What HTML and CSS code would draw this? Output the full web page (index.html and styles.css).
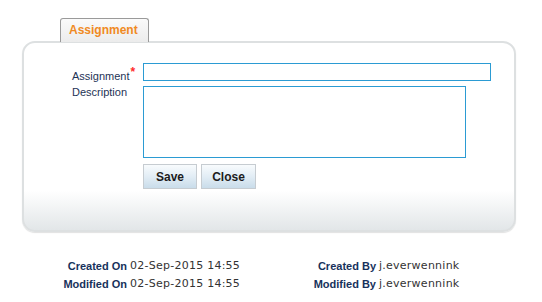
FILE: index.html
```html
<!DOCTYPE html>
<html>
<head>
<meta charset="utf-8">
<link rel="stylesheet" href="styles.css">
</head>
<body>
<div class="page">
  <div class="tabs">
    <div class="tab">Assignment</div>
  </div>
  <div class="panel">
    <div class="form">
      <label class="lbl lbl-first">Assignment<span class="req">*</span></label>
      <div class="field"><input class="input" type="text"></div>
      <label class="lbl">Description</label>
      <div class="field"><textarea class="area"></textarea></div>
      <div></div>
      <div class="buttons">
        <button class="btn">Save</button>
        <button class="btn">Close</button>
      </div>
    </div>
  </div>
  <div class="meta">
    <div class="mlabel">Created On</div>
    <div class="mvalue">02-Sep-2015 14:55</div>
    <div class="mlabel">Created By</div>
    <div class="mvalue">j.everwennink</div>
    <div class="mlabel">Modified On</div>
    <div class="mvalue">02-Sep-2015 14:55</div>
    <div class="mlabel">Modified By</div>
    <div class="mvalue">j.everwennink</div>
  </div>
</div>
</body>
</html>
```
FILE: styles.css
```css
* { box-sizing: border-box; }
html, body { margin: 0; padding: 0; background: #fff; }
body { font-family: "Liberation Sans", Arial, sans-serif; font-size: 11px; }
.page { width: 542px; height: 302px; overflow: hidden; padding-top: 18px; }

.tabs { padding-left: 60px; display: flex; height: 23px; position: relative; z-index: 1; }
.tab {
  border: 1px solid #9a9a9a;
  border-bottom: none;
  border-radius: 3px 3px 0 0;
  background: linear-gradient(to bottom, #fafafa 0%, #ececec 100%);
  color: #f08a24;
  font-weight: bold;
  font-size: 12px;
  line-height: 14px;
  padding: 4px 10px 4px 8px;
  height: 24px;
}

.panel {
  margin-left: 22px;
  width: 494px;
  height: 191px;
  border: 2px solid #dde0e1;
  border-radius: 13px;
  background: linear-gradient(to bottom, #ffffff 0%, #ffffff 79%, #e2e6e8 100%);
  box-shadow: 0 1px 1px rgba(0,0,0,0.12);
  padding: 20px 0 0 48px;
}

.form {
  display: grid;
  grid-template-columns: 71px auto;
  row-gap: 5px;
}
.lbl { color: #1e3356; line-height: 13px; }
.lbl-first { padding-top: 7px; height: 18px; }
.req { color: #ff2a2a; font-size: 12px; font-weight: bold; position: relative; top: -4px; margin-left: 1px; }
.field { display: flex; }
.input {
  width: 348px; height: 18px;
  border: 1px solid #2b9bd3;
  margin: 0; padding: 0; outline: none;
}
.area {
  width: 323px; height: 72px;
  border: 1px solid #2b9bd3;
  margin: 0; padding: 0; resize: none; outline: none;
}
.buttons { display: flex; gap: 4px; padding-top: 1px; }
.btn {
  height: 25px;
  border: 1px solid #c6ccd1;
  background: linear-gradient(to bottom, #f8fbfd 0%, #e2edf5 50%, #c9dcea 100%);
  font-family: "Liberation Sans", Arial, sans-serif;
  font-weight: bold;
  font-size: 12px;
  color: #1c1c1c;
  margin: 0;
  padding: 0;
}
.btn:first-child { width: 54px; }
.btn:last-child { width: 55px; }

.meta {
  display: grid;
  grid-template-columns: 127px 120px 123px auto;
  column-gap: 3px;
  margin-top: 25px;
  line-height: 18px;
}
.mlabel { text-align: right; font-weight: bold; color: #17325c; font-size: 11px; }
.mvalue { font-family: "DejaVu Sans", Verdana, sans-serif; font-size: 11px; letter-spacing: 0.25px; color: #333; }
```
